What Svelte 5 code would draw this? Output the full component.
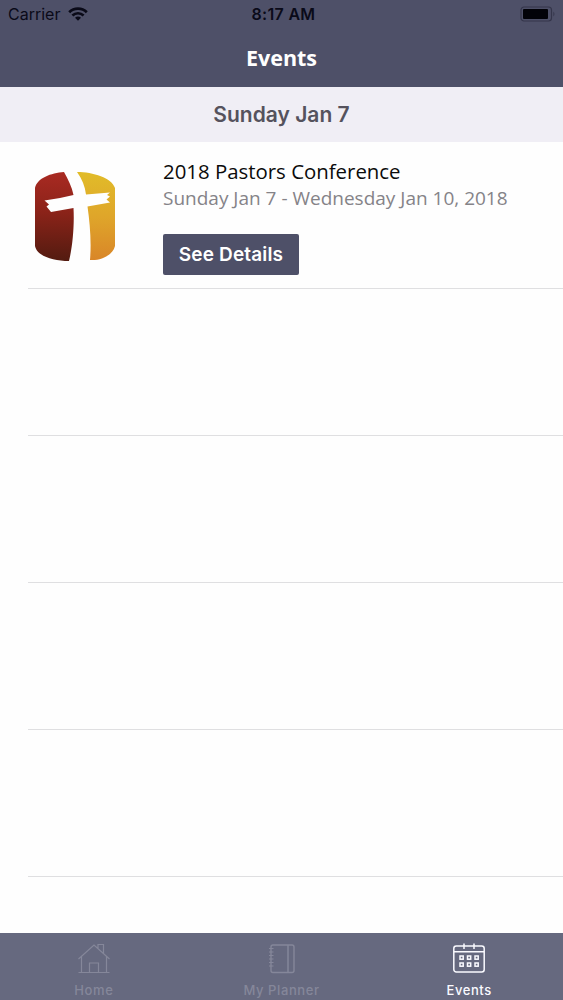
<script>
  let activeTab = 'events';

  const events = [
    { title: '2018 Pastors Conference', dates: 'Sunday Jan 7 - Wednesday Jan 10, 2018' }
  ];
  const emptyRows = [1, 2, 3, 4];

  const tabs = [
    { id: 'home', label: 'Home' },
    { id: 'planner', label: 'My Planner' },
    { id: 'events', label: 'Events' }
  ];

  const selectTab = (id) => () => (activeTab = id);
</script>

<div class="screen">
  <header>
    <div class="status">
      <div class="carrier">
        <span>Carrier</span>
        <svg width="20" height="14" viewBox="0 0 20 14" fill="none" stroke="currentColor" stroke-width="2.7">
          <path d="M1.2 5.2 C6 .4 14 .4 18.8 5.2" />
          <path d="M4.4 8.5 C7.6 5.5 12.4 5.5 15.6 8.5" />
          <path d="M7 10.7 Q10 8.3 13 10.7 L10 13.8 Z" fill="currentColor" stroke="none" />
        </svg>
      </div>
      <span class="time">8:17 AM</span>
      <svg class="battery" width="36" height="16" viewBox="0 0 36 16">
        <rect x="1" y="1" width="30.5" height="14" rx="3" fill="none" stroke="#34354a" stroke-width="1.2" />
        <rect x="3" y="3" width="25" height="10" rx="1" fill="#020208" />
        <path d="M33.4 5.5 Q35.5 8 33.4 10.5 Z" fill="#34354a" />
      </svg>
    </div>
    <h1>Events</h1>
  </header>

  <h2>Sunday Jan 7</h2>

  <main>
    {#each events as event}
      <div class="row">
        <svg class="logo" width="82" height="92" viewBox="0 0 82 92">
          <defs>
            <linearGradient id="red" x1="0" y1="0" x2="0" y2="1">
              <stop offset="0" stop-color="#a92a22" />
              <stop offset=".45" stop-color="#8b2319" />
              <stop offset="1" stop-color="#531b10" />
            </linearGradient>
            <linearGradient id="gold" x1="0" y1="0" x2="0" y2="1">
              <stop offset="0" stop-color="#e1bc29" />
              <stop offset=".5" stop-color="#dfa62a" />
              <stop offset="1" stop-color="#d98628" />
            </linearGradient>
          </defs>
          <path fill="url(#red)" d="M1 17 C3 7 17 2 30 1 C34 8 38 16 39.5 24 L26 27 L10.5 29.5 L15 33.5 L12.5 35.5 L17 41 L39.5 37 C40.5 55 38.5 76 35 90 C19 90 3 85 1 75 Z" />
          <path fill="url(#gold)" d="M43 1 C59 1 78 7 81 17 V75 C79 84 67 90 56 89 C57.5 71 56 53 53.5 35.5 L76 31.5 L72.5 28.5 L76 25.5 L73 24 L76 21.5 L52 23.5 C51 15 48 8 43 1 Z" />
        </svg>
        <div class="info">
          <p class="title">{event.title}</p>
          <p class="dates">{event.dates}</p>
          <button>See Details</button>
        </div>
      </div>
    {/each}
    {#each emptyRows as row}
      <div class="row"></div>
    {/each}
  </main>

  <nav>
    {#each tabs as tab}
      <button class="tab" class:active={activeTab === tab.id} on:click={selectTab(tab.id)}>
        <svg width="34" height="32" viewBox="0 0 34 32" fill="none" stroke="currentColor">
          {#if tab.id === 'home'}
            <path stroke-width="1.2" d="M1.5 16 L17 2 L32.5 16 M4.5 13.5 V29.5 H29.5 V13.5 M1.5 29.5 H32.5 M21 5.5 V1.5 H26.5 V10.5 M12.5 29.5 V20 H21.5 V29.5" />
          {:else if tab.id === 'planner'}
            <rect x="6" y="2" width="23" height="27.5" rx="2" stroke-width="1.4" />
            <path stroke-width="1.5" d="M23 2 V29.5" />
            <path stroke-width="1.2" d="M4 5.5 H8.5 M4 9 H8.5 M4 12.5 H8.5 M4 16 H8.5 M4 19.5 H8.5 M4 23 H8.5" />
          {:else}
            <rect x="1.8" y="3" width="30.4" height="26" rx="2.5" stroke-width="1.5" />
            <path stroke-width="1.5" d="M2 8.8 H32 M12 .5 V6 M22 .5 V6" />
            {#each [13, 20] as y}
              {#each [8, 15.5, 23] as x}
                <rect {x} {y} width="3.2" height="3.2" stroke-width="1.5" />
              {/each}
            {/each}
          {/if}
        </svg>
        <span>{tab.label}</span>
      </button>
    {/each}
  </nav>
</div>

<style>
  :global(body) {
    margin: 0;
  }
  .screen {
    display: flex;
    flex-direction: column;
    height: 1000px;
    overflow: hidden;
    background: #fefefe;
    font-family: Inter, sans-serif;
  }
  header {
    height: 87px;
    box-sizing: border-box;
    background: #4e5068;
  }
  .status {
    display: grid;
    grid-template-columns: 1fr auto 1fr;
    align-items: center;
    height: 28px;
    padding: 0 7px 0 8px;
    color: #0a0a18;
    font-size: 16px;
    line-height: 28px;
  }
  .carrier {
    display: flex;
    align-items: center;
    gap: 8px;
  }
  .time {
    padding-left: 3px;
    font-weight: 600;
    letter-spacing: 0.3px;
  }
  .battery {
    justify-self: end;
  }
  h1 {
    margin: 14px 0 0;
    color: #fff;
    font: 700 21.5px/31px "Open Sans", sans-serif;
    text-align: center;
  }
  h2 {
    height: 55px;
    margin: 0;
    background: #f0eef5;
    color: #55525d;
    font-size: 21px;
    font-weight: 600;
    line-height: 55px;
    text-align: center;
  }
  main {
    flex: 1;
  }
  .row {
    display: flex;
    box-sizing: border-box;
    height: 147px;
    margin-left: 28px;
    border-bottom: 1px solid #dfdfe1;
  }
  .logo {
    margin: 29px 0 0 6px;
  }
  .info {
    margin-left: 47px;
    padding-top: 16px;
  }
  p {
    margin: 0;
    font: 20.4px/27px "Open Sans", sans-serif;
    white-space: nowrap;
  }
  .title {
    color: #0b0b0b;
  }
  .dates {
    color: #858388;
    font-size: 19px;
  }
  .info button {
    width: 136px;
    height: 41px;
    margin-top: 22px;
    padding: 0;
    border: 0;
    border-radius: 2px;
    background: #4e5068;
    color: #fff;
    font: 600 19px/41px Inter, sans-serif;
    letter-spacing: 0.15px;
  }
  nav {
    display: flex;
    height: 67px;
    background: #66697f;
  }
  .tab {
    display: flex;
    flex: 1;
    flex-direction: column;
    align-items: center;
    padding: 10px 0 0;
    border: 0;
    background: none;
    color: #85879a;
    font: 500 13px/18px Inter, sans-serif;
    letter-spacing: 0.6px;
  }
  .tab span {
    margin-top: 6px;
  }
  .tab.active {
    color: #fafaff;
  }
</style>
